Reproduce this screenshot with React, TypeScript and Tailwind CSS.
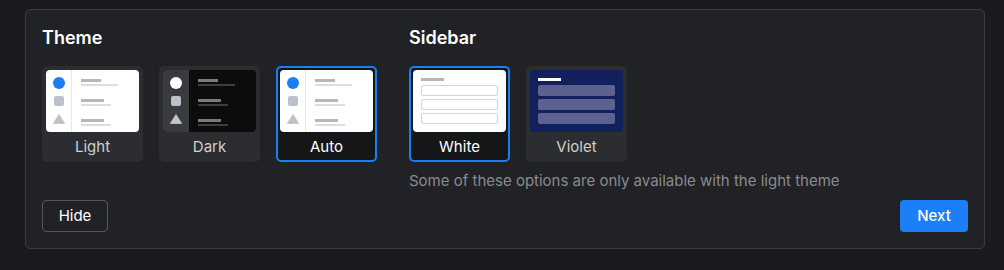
import type { ReactNode } from 'react'

const BLUE = 'border-[#1c7ef5]'

function Triangle({ color }: { color: string }) {
  return (
    <svg width="12" height="10" viewBox="0 0 12 10">
      <path d="M6 0.5 L11.6 9.4 L0.4 9.4 Z" fill={color} stroke={color} strokeWidth="0.8" strokeLinejoin="round" />
    </svg>
  )
}

function Lines({ bar, line }: { bar: string; line: string }) {
  const groups = [
    [20, 37],
    [23, 30],
    [23, 30],
  ]
  return (
    <div className="flex flex-1 flex-col gap-[13px] pl-[9px] pt-[9px]">
      {groups.map(([b, l], i) => (
        <div key={i} className="flex flex-col gap-[2px]">
          <div className={`h-[3px] ${bar}`} style={{ width: b }} />
          <div className={`h-[2px] ${line}`} style={{ width: l }} />
        </div>
      ))}
    </div>
  )
}

function ThemePreview({ dark }: { dark?: boolean }) {
  return (
    <div className={`flex h-[62px] overflow-hidden rounded-[4px] ${dark ? 'bg-[#0c0c0c]' : 'bg-white'}`}>
      <div
        className={`flex w-[26px] flex-col items-center pt-[7px] ${
          dark ? 'bg-[#3a3b3e]' : 'border-r border-[#dde9fb]'
        }`}
      >
        <div className={`h-3 w-3 rounded-full ${dark ? 'bg-white' : 'bg-[#1c7ef5]'}`} />
        <div className="mt-[7px] h-[10px] w-[10px] rounded-[2px] bg-[#bcc0c8]" />
        <div className="mt-[8px]">
          <Triangle color={dark ? '#c3c6cc' : '#bcc0c8'} />
        </div>
      </div>
      <Lines bar={dark ? 'bg-[#7a7a7a]' : 'bg-[#b7b7b7]'} line={dark ? 'bg-[#3e3e3e]' : 'bg-[#dedede]'} />
    </div>
  )
}

function SidebarPreview({ violet }: { violet?: boolean }) {
  return (
    <div
      className={`flex h-[62px] flex-col rounded-[4px] px-[8px] pt-[8px] ${
        violet ? 'bg-[#13205e]' : 'bg-white'
      }`}
    >
      <div className={`h-[3px] w-[23px] ${violet ? 'bg-white' : 'bg-[#b7b7b7]'}`} />
      <div className="mt-[4px] flex flex-col gap-[3px]">
        {[0, 1, 2].map((i) => (
          <div
            key={i}
            className={`h-[11px] rounded-[2px] ${
              violet ? 'bg-[#5c6190]' : 'border border-[#d4d4d4] bg-white'
            }`}
          />
        ))}
      </div>
    </div>
  )
}

function Option({ label, selected, children }: { label: string; selected?: boolean; children: ReactNode }) {
  return (
    <button
      type="button"
      className={`flex h-[96px] w-[101px] flex-col rounded-[5px] text-left ${
        selected ? `border-2 ${BLUE} bg-[#151618] p-[2px]` : 'bg-[#2c2d30] p-[4px]'
      }`}
    >
      {children}
      <div
        className={`flex flex-1 items-center justify-center pt-[4px] text-[15px] ${
          selected ? 'text-white' : 'text-[#cfd0d2]'
        }`}
      >
        {label}
      </div>
    </button>
  )
}

export default function App() {
  return (
    <div className="min-h-screen bg-[#1a1b1e] pl-[25px] pt-[9px]" style={{ fontFamily: 'Inter, "Noto Sans", sans-serif' }}>
      <div className="w-[960px] rounded-[5px] border border-[#3b3c40] bg-[#212225] p-4">
        <div className="flex gap-8">
          <section>
            <h2 className="text-[18px] font-semibold leading-6 text-white">Theme</h2>
            <div className="mt-4 flex gap-4">
              <Option label="Light">
                <ThemePreview />
              </Option>
              <Option label="Dark">
                <ThemePreview dark />
              </Option>
              <Option label="Auto" selected>
                <ThemePreview />
              </Option>
            </div>
          </section>
          <section>
            <h2 className="text-[18px] font-semibold leading-6 text-white">Sidebar</h2>
            <div className="mt-4 flex gap-4">
              <Option label="White" selected>
                <SidebarPreview />
              </Option>
              <Option label="Violet">
                <SidebarPreview violet />
              </Option>
            </div>
            <p className="mt-[9px] text-[15px] leading-5 text-[#8a8b8f]">
              Some of these options are only available with the light theme
            </p>
          </section>
        </div>
        <div className="mt-[9px] flex items-center justify-between">
          <button
            type="button"
            className="h-8 w-[66px] rounded-[4px] border border-[#55565a] pt-px text-[15px] text-white"
          >
            Hide
          </button>
          <button type="button" className="h-8 w-[68px] rounded-[4px] bg-[#1d7ff7] pt-px text-[15px] font-medium text-white">
            Next
          </button>
        </div>
      </div>
    </div>
  )
}
